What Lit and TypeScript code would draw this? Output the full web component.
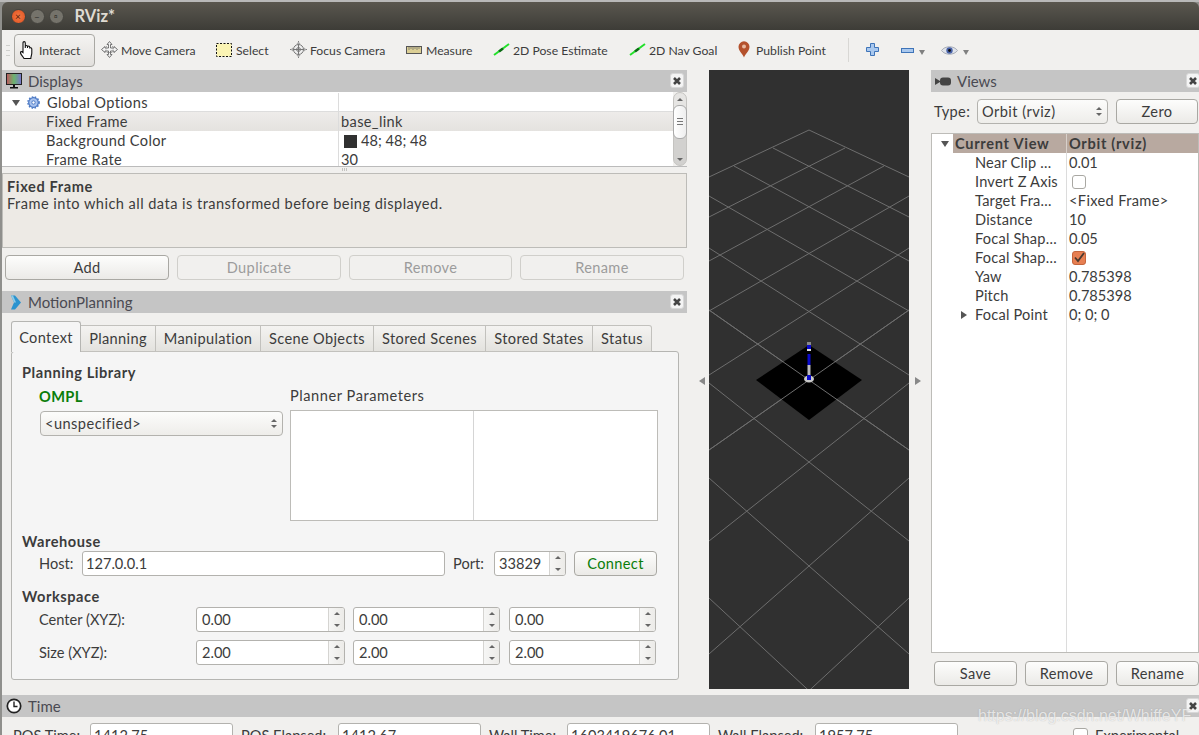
import { LitElement, css, html, svg } from "lit";
import { customElement } from "lit/decorators.js";

// right-hand half of the grid, in canvas pixels; the other half is mirrored around x = 100
const gridLines = [
  [100, 60, 0, 107],
  [136, 78, 0, 147],
  [175, 96, 0, 191],
  [200, 126, 0, 241],
  [200, 178, 0, 305],
  [200, 240, 0, 380],
  [200, 313, 0, 471],
  [200, 408, 0, 584],
  [200, 528, 90, 630],
];

const updown = html`<span class="updown"><i class="up"></i><i class="down"></i></span>`;

const spin = (value: string, cls: string) =>
  html`<div class="spin ${cls}"><span class="val">${value}</span><span class="spin-btns"><b><i class="up"></i></b><b><i class="down"></i></b></span></div>`;

const closeBtn = html`<span class="close"><svg width="10" height="10" viewBox="0 0 10 10"><path d="M2 2l6 6M8 2l-6 6" stroke="#444" stroke-width="2.6"/></svg></span>`;

const icons = {
  hand: html`<svg width="18" height="20" viewBox="0 0 18 20"><path d="M5 18.500c-1-2-3-3.500-3.500-5.500-.3-1.500 1-2 2.500-.5V3c0-1.800 2.300-1.800 2.300 0v5-1.500c0-1.400 2.200-1.400 2.200 0V8 7c0-1.300 2.200-1.300 2.200 0v1.500c0-1.200 2.100-1 2.100.4V13c0 2-1 3.500-1 5.500z" fill="#fff" stroke="#111" stroke-width="1.100"/></svg>`,
  move: html`<svg width="17" height="17" viewBox="0 0 17 17"><path d="M8.500 .5l2.500 3H9.500v3.500h3.500V5.500l3.500 3-3.500 3V10H9.500v3.500H11l-2.500 3-2.500-3h1.500V10H4v1.500l-3.500-3 3.500-3V7h3.500V3.500H6z" fill="#f4f4f4" stroke="#666" stroke-width=".9"/><path d="M5 5.500h7v6H5z" fill="none" stroke="#888" stroke-width=".7" stroke-dasharray="1 1"/></svg>`,
  select: html`<svg width="16" height="14" viewBox="0 0 16 14"><rect x=".5" y=".5" width="15" height="13" fill="#fbf4b4" stroke="#111" stroke-dasharray="2 1.500"/></svg>`,
  focus: html`<svg width="17" height="17" viewBox="0 0 17 17"><circle cx="8.500" cy="8.500" r="5" fill="#eee" stroke="#777"/><circle cx="8.500" cy="8.500" r="2" fill="#ddd" stroke="#888"/><path d="M8.500 0v17M0 8.500h17" stroke="#777"/><path d="M8.500 .5l2 2.500h-4zM8.500 16.500l2-2.500h-4zM.5 8.500l2.500-2v4zM16.500 8.500l-2.500-2v4z" fill="#aaa"/></svg>`,
  measure: html`<svg width="16" height="8" viewBox="0 0 16 8"><rect x=".5" y=".5" width="15" height="7" fill="#dccf95" stroke="#555"/><path d="M3 1v3M5 1v2M7 1v3M9 1v2M11 1v3M13 1v2" stroke="#666" stroke-width=".7"/></svg>`,
  arrow: html`<svg width="17" height="13" viewBox="0 0 17 13"><path d="M1 12L16 1" stroke="#22e02a" stroke-width="2"/><path d="M6 8.500l4-3" stroke="#0c6a14" stroke-width="2.400"/></svg>`,
  pin: html`<svg width="12" height="17" viewBox="0 0 12 17"><path d="M6 16.500C4.500 12.500.5 10 .5 5.800a5.500 5.500 0 0 1 11 0C11.500 10 7.500 12.500 6 16.500z" fill="#b4512c"/><circle cx="6" cy="5.500" r="2" fill="#e8b9a0"/></svg>`,
  plus: html`<svg width="13" height="13" viewBox="0 0 13 13"><path d="M4.500 .5h4v4h4v4h-4v4h-4v-4h-4v-4h4z" fill="#a9c8ee" stroke="#3f74b8"/></svg>`,
  minus: html`<svg width="13" height="5" viewBox="0 0 13 5"><rect x=".5" y=".5" width="12" height="4" fill="#a9c8ee" stroke="#3f74b8"/></svg>`,
  eye: html`<svg width="17" height="11" viewBox="0 0 17 11"><path d="M.5 5.500C4 .5 13 .5 16.500 5.500 13 10.500 4 10.500 .5 5.500z" fill="#dfe3ea" stroke="#a8adb8"/><circle cx="8.500" cy="5.500" r="3.200" fill="#4a63a8"/><circle cx="8.500" cy="5.500" r="1.400" fill="#111"/></svg>`,
  monitor: html`<svg width="16" height="16" viewBox="0 0 16 16"><defs><linearGradient id="scr"><stop offset="0" stop-color="#c0555f"/><stop offset=".5" stop-color="#6ab56e"/><stop offset="1" stop-color="#7d74d0"/></linearGradient></defs><rect x=".5" y=".5" width="15" height="11" fill="url(#scr)" stroke="#222"/><path d="M7 12h2v2H7zM4 14h8v1.500H4z" fill="#111"/></svg>`,
  gear: html`<svg width="13" height="13" viewBox="0 0 13 13"><circle cx="6.500" cy="6.500" r="4.800" fill="#a9c3ee" stroke="#4a78c4" stroke-width="1.200"/><circle cx="6.500" cy="6.500" r="5.600" fill="none" stroke="#4a78c4" stroke-width="1.500" stroke-dasharray="1.500 1.500"/><circle cx="6.500" cy="6.500" r="1.700" fill="#fff" stroke="#4a78c4"/></svg>`,
  motion: html`<svg class="motion" width="12" height="15" viewBox="0 0 12 15"><path d="M1 .5l4 0 6 7-6 7-4 0 3-7z" fill="#2a93cf"/><path d="M1 .5l2 0 3 7-2 0z" fill="#8ecbe8"/></svg>`,
  clock: html`<svg width="16" height="16" viewBox="0 0 16 16"><circle cx="8" cy="8" r="6.700" fill="#fff" stroke="#222" stroke-width="1.700"/><path d="M8 3.500V8.500H11.500" fill="none" stroke="#222" stroke-width="1.400"/></svg>`,
  camera: html`<svg width="16" height="9" viewBox="0 0 16 9"><path d="M0 1l5 3v1L0 8z" fill="#444"/><rect x="5" y=".5" width="11" height="8" rx="3" fill="#444"/></svg>`,
};

const tools = [
  { icon: icons.move, label: "Move Camera", cls: "" },
  { icon: icons.select, label: "Select", cls: "" },
  { icon: icons.focus, label: "Focus Camera", cls: "" },
  { icon: icons.measure, label: "Measure", cls: "" },
  { icon: icons.arrow, label: "2D Pose Estimate", cls: "" },
  { icon: icons.arrow, label: "2D Nav Goal", cls: "" },
  { icon: icons.pin, label: "Publish Point", cls: "narrow" },
];

const viewRows: [string, unknown][] = [
  ["Near Clip …", "0.01"],
  ["Invert Z Axis", html`<span class="check"></span>`],
  ["Target Fra…", html`<span class="wide">&lt;Fixed Frame&gt;</span>`],
  ["Distance", "10"],
  ["Focal Shap…", "0.05"],
  ["Focal Shap…", html`<span class="check on"><svg width="14" height="14" viewBox="0 0 14 14"><path d="M3 6.500l3 3.500 6-8" fill="none" stroke="#4a3a30" stroke-width="1.800"/></svg></span>`],
  ["Yaw", "0.785398"],
  ["Pitch", "0.785398"],
  ["Focal Point", "0; 0; 0"],
];

@customElement("app-root")
export class AppRoot extends LitElement {
  static styles = css`
    :host {
      display: block;
      width: 1199px;
      height: 735px;
      overflow: hidden;
      position: relative;
      background: #8f8f8c;
      font-family: "Lato", "Liberation Sans", sans-serif;
      font-size: 14.6px;
      letter-spacing: .35px;
      color: #3c3c3c;
    }
    svg { display: block; flex: none; }
    .strip { height: 2px; background: #b9b9b9; }
    .titlebar {
      height: 28px;
      margin-left: 2px;
      border-radius: 6px 6px 0 0;
      background: linear-gradient(#5a574f, #3d3c37);
      display: flex;
      align-items: center;
      padding-left: 8.500px;
      gap: 4px;
      box-sizing: border-box;
    }
    .dot { width: 15px; height: 15px; border-radius: 50%; background: #75736b; border: 1px solid #44433e; box-sizing: border-box; display: grid; place-items: center; color: #33322e; font-size: 10px; line-height: 1; letter-spacing: 0; }
    .dot.red { background: radial-gradient(#f47a45, #df4f1e); color: #5a1c08; }
    .title { margin-left: 7px; color: #dfdbd2; font-weight: 700; font-size: 16.500px; letter-spacing: 0; }
    .body { margin-left: 2px; height: 705px; position: relative; background: #f1f0ee; }
    .toolbar {
      height: 40px;
      display: grid;
      grid-template-columns: 12px 81px 6px 115px 74px 116px 87px 136px 109px 110px 18px 35px 40px 60px;
      align-items: center;
      font-size: 12.200px;
      letter-spacing: 0;
      box-sizing: border-box;
    }
    .grip { width: 4px; height: 9px; margin-left: 4px; border-top: 1px solid #cfcfcc; border-bottom: 1px solid #cfcfcc; background: linear-gradient(#cfcfcc, #cfcfcc) center / 100% 1px no-repeat; }
    .interact {
      height: 33px;
      box-sizing: border-box;
      border: 1px solid #a9a8a3;
      border-radius: 4px;
      background: linear-gradient(#f4f3f1, #e2e0dd);
      display: flex;
      align-items: center;
      gap: 2px;
      padding-left: 4px;
    }
    .tool { display: flex; align-items: center; gap: 4px; white-space: nowrap; }
    .tool svg { margin-bottom: 1px; }
    .tool.narrow { margin-left: -2px; }
    .tool-icon { width: 16px; display: grid; justify-items: center; flex: none; }
    .sep { width: 1px; height: 24px; background: #d8d7d4; }
    .drop { display: flex; align-items: center; gap: 5px; }
    .caret { width: 0; height: 0; border: 3.500px solid transparent; border-top: 5px solid #808080; border-bottom: 0; margin-top: 5px; }

    .main { display: flex; height: 625px; }
    .left { width: 685px; flex: none; display: flex; flex-direction: column; }
    .right { flex: 1; min-width: 0; display: flex; flex-direction: column; }
    .handle { width: 22px; flex: none; display: grid; place-items: center; height: 619px; }
    .tri-l { width: 0; height: 0; border: 4px solid transparent; border-right: 6px solid #888; border-left: 0; margin-top: 2px; margin-left: 8px; }
    .tri-r { width: 0; height: 0; border: 4px solid transparent; border-left: 6px solid #888; border-right: 0; margin-top: 2px; margin-right: 4px; }
    .canvas { width: 200px; height: 619px; flex: none; background: #303030; }

    .dock-head {
      height: 22px;
      flex: none;
      background: #c5c5c5;
      display: flex;
      align-items: center;
      gap: 6px;
      padding-left: 4px;
      color: #4a4a52;
      font-size: 15px;
      letter-spacing: 0;
      position: relative;
    }
    .motion { margin-left: 4px; }
    .close {
      position: absolute;
      right: 3px;
      top: 3px;
      width: 14px;
      height: 15px;
      box-sizing: border-box;
      border: 1px solid #d8d8d8;
      border-radius: 3px;
      background: #f4f4f4;
      display: grid;
      place-items: center;
    }
    .right .close, .time-bar .close { right: -1px; }

    .tree-wrap { display: flex; height: 75px; flex: none; border-bottom: 1px solid #bbb; box-sizing: border-box; }
    .tree { flex: 1; background: #fff; overflow: hidden; }
    .row { display: grid; grid-template-columns: 337px 1fr; height: 19px; line-height: 19px; white-space: nowrap; }
    .row > :first-child { padding-left: 44px; border-right: 1px solid #dcdcdc; }
    .row > :last-child { padding-left: 2px; }
    .row .num { letter-spacing: 0; }
    .row.opt { height: 20px; border-bottom: 1px solid #ddd; box-sizing: border-box; padding-top: 1px; }
    .row.opt > :first-child { padding-left: 10px; display: flex; align-items: center; gap: 7px; }
    .row.sel { background: linear-gradient(#eeecea, #e4e2df); }
    .tw { width: 0; height: 0; border: 4px solid transparent; border-top: 6px solid #555; border-bottom: 0; margin-top: 1px; flex: none; }
    .tw.side { border: 4px solid transparent; border-left: 6px solid #555; border-right: 0; margin: 0; }
    .swatch { width: 13px; height: 13px; background: #303030; display: inline-block; margin: 0 4px 0 3px; vertical-align: -2px; }
    .vscroll { width: 14px; flex: none; background: linear-gradient(#e6e5e3 0 14px, #d2d1cf 14px); border: 1px solid #c4c3c0; border-radius: 7px; box-sizing: border-box; display: flex; flex-direction: column; align-items: center; justify-content: space-between; padding: 5px 0 4px; position: relative; }
    .thumb { position: absolute; top: 12px; left: -1px; width: 14px; height: 34px; box-sizing: border-box; border: 1px solid #aaa; border-radius: 6px; background: linear-gradient(#777, #777) center 12px / 6px 1px no-repeat, linear-gradient(#777, #777) center 15px / 6px 1px no-repeat, linear-gradient(#777, #777) center 18px / 6px 1px no-repeat, linear-gradient(90deg, #fff, #eee); }
    .up { display: block; width: 0; height: 0; border: 3px solid transparent; border-bottom: 3.500px solid #666; border-top: 0; }
    .down { display: block; width: 0; height: 0; border: 3px solid transparent; border-top: 3.500px solid #666; border-bottom: 0; }
    .splitter { height: 6px; flex: none; display: flex; justify-content: center; }
    .splitter i { width: 5px; height: 3px; margin: 1px 0 0 0; background: repeating-linear-gradient(90deg, #c4c3c0 0 1px, transparent 1px 2px); }
    .desc { height: 75px; flex: none; box-sizing: border-box; background: #edeae5; border: 1px solid #bdbcb8; padding: 4px 4px; line-height: 17px; letter-spacing: .45px; }
    .desc b { display: block; letter-spacing: .6px; }
    .btn {
      height: 25px;
      box-sizing: border-box;
      border: 1px solid #a9a8a3;
      border-radius: 4px;
      background: linear-gradient(#fdfdfc, #ebeae7);
      display: grid;
      place-items: center;
      white-space: nowrap;
    }
    .btn.off { border-color: #d0cfcb; background: #f1f0ee; color: #9c9c9c; }
    .btns { display: grid; grid-template-columns: 164px 164px 163px 164px; gap: 8px; padding: 7px 3px 0; margin-bottom: 11px; }
    .btns .btn { width: 100%; }

    .tabs { display: flex; align-items: flex-end; height: 39px; padding-left: 9px; flex: none; box-sizing: border-box; margin-bottom: -1px; position: relative; }
    .tab { height: 27px; box-sizing: border-box; border: 1px solid #c2c1bd; border-left: 0; background: linear-gradient(#f4f3f1, #e3e2de); display: grid; place-items: center; white-space: nowrap; }
    .tab.on { height: 31px; width: 70px; border: 1px solid #b5b5b2; border-bottom: 0; border-radius: 3px 3px 0 0; background: #f5f5f5; z-index: 1; }
    .tab.planning { width: 75px; }
    .tab.manip { width: 105px; }
    .tab.scene { width: 113px; }
    .tab.scenes { width: 112px; }
    .tab.states { width: 107px; }
    .tab.status { width: 59px; border-radius: 0 3px 0 0; }
    .pane {
      margin-left: 9px;
      width: 668px;
      height: 329px;
      box-sizing: border-box;
      border: 1px solid #b5b5b2;
      border-radius: 3px;
      background: #f5f5f5;
      padding: 11px 10px 0;
      display: flex;
      flex-direction: column;
    }
    .pane > b { font-weight: 700; line-height: 19px; display: block; letter-spacing: .55px; }
    .lib { display: grid; grid-template-columns: 243px 368px; column-gap: 7px; margin-left: 18px; margin-top: 5px; }
    .lib .ompl { color: #0a7d0a; font-weight: 700; line-height: 19px; margin-left: -1px; }
    .lib .pp { line-height: 18px; letter-spacing: .55px; }
    .combo { margin-top: 5px; height: 25px; box-sizing: border-box; border: 1px solid #b3b2ae; border-radius: 4px; background: linear-gradient(#fcfcfb, #eeedea); display: flex; align-items: center; justify-content: space-between; padding: 0 5px 0 4px; letter-spacing: .45px; }
    .updown { display: flex; flex-direction: column; gap: 3px; }
    .planner { margin-top: 5px; height: 111px; box-sizing: border-box; border: 1px solid #bdbcb8; background: #fff; display: grid; grid-template-columns: 183px 1fr; }
    .planner i { border-right: 1px solid #d5d5d5; }
    .h-ware { margin-top: 11px; }
    .ware { display: flex; align-items: center; margin: 0 0 0 17px; height: 25px; }
    .ware .lbl1 { width: 43px; letter-spacing: 0; }
    .field { height: 25px; box-sizing: border-box; border: 1px solid #b3b2ae; border-radius: 3px; background: #fff; display: flex; align-items: center; padding-left: 3px; flex: none; overflow: hidden; white-space: nowrap; letter-spacing: 0; }
    .host { width: 363px; }
    .ware .lbl2 { width: 41px; margin-left: 8px; letter-spacing: 0; }
    .spin { height: 25px; box-sizing: border-box; border: 1px solid #b3b2ae; border-radius: 3px; background: #fff; display: flex; align-items: stretch; flex: none; overflow: hidden; letter-spacing: 0; }
    .spin .val { flex: 1; padding-left: 5px; line-height: 23px; white-space: nowrap; }
    .spin-btns { width: 15px; flex: none; border-left: 1px solid #d5d4d1; background: linear-gradient(90deg, #f6f6f5, #ecebe8); display: flex; flex-direction: column; }
    .spin-btns b { flex: 1; display: grid; place-items: center; line-height: 0; }
    .port { width: 72px; }
    .port .val { padding-left: 4px; }
    .connect { width: 83px; margin-left: 8px; color: #0a7d0a; flex: none; }
    .h-work { margin-top: 11px; }
    .ws { display: grid; grid-template-columns: 149px 149px 147px 147px; column-gap: 8px; margin-top: 1px; align-items: center; padding-left: 17px; letter-spacing: 0; }
    .ws.two { margin-top: 8px; }
    .s1 { width: 149px; }
    .s2 { width: 147px; }
    .s3 { width: 147px; margin-left: 1px; }

    .view-type { display: flex; align-items: center; height: 25px; margin-top: 7px; flex: none; padding-left: 3px; }
    .view-type .lbl { width: 43px; }
    .view-type .combo { margin: 0; width: 131px; }
    .zero { width: 82px; margin-left: 8px; flex: none; }
    .vtree { margin-top: 9px; height: 520px; flex: none; box-sizing: border-box; border: 1px solid #bdbcb8; background: #fff; overflow: hidden; }
    .vrow { display: grid; grid-template-columns: 135px 1fr; height: 19px; line-height: 19px; white-space: nowrap; letter-spacing: .2px; }
    .vrow > :first-child { padding-left: 43px; border-right: 1px solid #dcdcdc; display: flex; align-items: center; position: relative; }
    .vrow > :last-child { padding-left: 2px; display: flex; align-items: center; letter-spacing: 0; }
    .vrow .wide { letter-spacing: .35px; }
    .vrow .tw.side { position: absolute; left: 29px; top: 6px; }
    .vfill { height: 330px; display: grid; grid-template-columns: 135px 1fr; }
    .vfill i { border-right: 1px solid #dcdcdc; }
    .vhead { display: grid; grid-template-columns: 21px 114px 1fr; height: 19px; line-height: 19px; font-weight: 700; letter-spacing: .7px; }
    .vhead > span { background: #b8a9a0; }
    .vhead .twbox { background: #fff; display: grid; place-items: center; padding-left: 5px; }
    .vhead .name { padding-left: 2px; border-right: 1px solid #d8d0ca; }
    .vhead .val { padding-left: 2px; }
    .check { width: 14px; height: 14px; margin-left: 3px; box-sizing: border-box; border: 1px solid #a9a8a3; border-radius: 3px; background: #fff; display: block; flex: none; }
    .check.on { background: #e77f52; border-color: #c4653d; }
    .check.on svg { margin: -1px; }
    .view-btns { display: grid; grid-template-columns: 83px 83px 83px; column-gap: 8px; padding: 8px 0 0 3px; }

    .time-bar { height: 40px; overflow: hidden; }
    .time-row { display: flex; align-items: center; height: 25px; margin-top: 6px; padding-left: 11px; white-space: nowrap; letter-spacing: 0; }
    .time-row .t-lbl { flex: none; }
    .t1 { width: 77px; }
    .t2 { width: 97px; }
    .t3 { width: 78px; }
    .t4 { width: 97px; }
    .t-val { width: 143px; margin-right: 8px; }
    .exp-check { margin-left: 107px; width: 15px; height: 15px; }
    .exp { margin-left: 7px; }
    .watermark { position: absolute; left: 978px; top: 707px; color: rgba(255, 255, 255, .72); font-family: "Liberation Sans", sans-serif; font-size: 16px; letter-spacing: 0; white-space: nowrap; text-shadow: 0 0 1px rgba(120, 120, 120, .5); }
  `;

  private renderGrid() {
    const line = ([x1, y1, x2, y2]: number[]) => svg`
      <line x1=${x1} y1=${y1} x2=${x2} y2=${y2} stroke="#6e6e6e"/>
      <line x1=${200 - x1} y1=${y1} x2=${200 - x2} y2=${y2} stroke="#6e6e6e"/>`;
    return html`<svg class="canvas" width="200" height="619" viewBox="0 0 200 619">
      ${gridLines.map(line)}
      <path d="M100 275L153 310 100 350 47 310z" fill="#000"/>
      ${line(gridLines[5])}
      <ellipse cx="100" cy="309" rx="5" ry="3.500" fill="#c9c9c9"/>
      <path d="M100 272v3" stroke="#888" stroke-width="4"/>
      <path d="M100 275v4" stroke="#0a0acb" stroke-width="4"/>
      <path d="M100 279v2" stroke="#ddd" stroke-width="4"/>
      <path d="M100 284v11" stroke="#0a0acb" stroke-width="3"/>
      <path d="M100 295v10" stroke="#bdbdbd" stroke-width="3"/>
      <path d="M100 305v5" stroke="#0a0acb" stroke-width="4"/>
    </svg>`;
  }

  render() {
    return html`
      <div class="strip"></div>
      <div class="titlebar">
        <span class="dot red">×</span><span class="dot">–</span><span class="dot">▫</span>
        <span class="title">RViz*</span>
      </div>
      <div class="body">
        <div class="toolbar">
          <span class="grip"></span>
          <div class="interact">${icons.hand}<span>Interact</span></div>
          <span></span>
          ${tools.map((t) => html`<div class="tool ${t.cls}"><span class="tool-icon">${t.icon}</span><span>${t.label}</span></div>`)}
          <span class="sep"></span>
          <div class="tool">${icons.plus}</div>
          <div class="drop">${icons.minus}<span class="caret"></span></div>
          <div class="drop">${icons.eye}<span class="caret"></span></div>
        </div>
        <div class="main">
          <div class="left">
            <div class="dock-head">${icons.monitor}<span>Displays</span>${closeBtn}</div>
            <div class="tree-wrap">
              <div class="tree">
                <div class="row opt"><div><span class="tw"></span>${icons.gear}<span>Global Options</span></div><div></div></div>
                <div class="row sel"><div>Fixed Frame</div><div>base_link</div></div>
                <div class="row"><div>Background Color</div><div class="num"><span class="swatch"></span>48; 48; 48</div></div>
                <div class="row"><div>Frame Rate</div><div class="num">30</div></div>
              </div>
              <div class="vscroll"><i class="up"></i><span class="thumb"></span><i class="down"></i></div>
            </div>
            <div class="splitter"><i></i></div>
            <div class="desc"><b>Fixed Frame</b>Frame into which all data is transformed before being displayed.</div>
            <div class="btns">
              <div class="btn">Add</div>
              <div class="btn off">Duplicate</div>
              <div class="btn off">Remove</div>
              <div class="btn off">Rename</div>
            </div>
            <div class="dock-head">${icons.motion}<span>MotionPlanning</span>${closeBtn}</div>
            <div class="tabs">
              <div class="tab on">Context</div>
              <div class="tab planning">Planning</div>
              <div class="tab manip">Manipulation</div>
              <div class="tab scene">Scene Objects</div>
              <div class="tab scenes">Stored Scenes</div>
              <div class="tab states">Stored States</div>
              <div class="tab status">Status</div>
            </div>
            <div class="pane">
              <b>Planning Library</b>
              <div class="lib">
                <div>
                  <div class="ompl">OMPL</div>
                  <div class="combo"><span>&lt;unspecified&gt;</span>${updown}</div>
                </div>
                <div>
                  <div class="pp">Planner Parameters</div>
                  <div class="planner"><i></i><span></span></div>
                </div>
              </div>
              <b class="h-ware">Warehouse</b>
              <div class="ware">
                <span class="lbl1">Host:</span>
                <div class="field host">127.0.0.1</div>
                <span class="lbl2">Port:</span>
                ${spin("33829", "port")}
                <div class="btn connect">Connect</div>
              </div>
              <b class="h-work">Workspace</b>
              <div class="ws">
                <span>Center (XYZ):</span>
                ${spin("0.00", "s1")}${spin("0.00", "s2")}${spin("0.00", "s3")}
              </div>
              <div class="ws two">
                <span>Size (XYZ):</span>
                ${spin("2.00", "s1")}${spin("2.00", "s2")}${spin("2.00", "s3")}
              </div>
            </div>
          </div>
          <div class="handle"><span class="tri-l"></span></div>
          ${this.renderGrid()}
          <div class="handle"><span class="tri-r"></span></div>
          <div class="right">
            <div class="dock-head">${icons.camera}<span>Views</span>${closeBtn}</div>
            <div class="view-type">
              <span class="lbl">Type:</span>
              <div class="combo"><span>Orbit (rviz)</span>${updown}</div>
              <div class="btn zero">Zero</div>
            </div>
            <div class="vtree">
              <div class="vhead"><span class="twbox"><i class="tw"></i></span><span class="name">Current View</span><span class="val">Orbit (rviz)</span></div>
              ${viewRows.map(
                ([name, value], i) => html`<div class="vrow"><div>${i === 8 ? html`<i class="tw side"></i>` : ""}<span>${name}</span></div><div>${value}</div></div>`
              )}
              <div class="vfill"><i></i><span></span></div>
            </div>
            <div class="view-btns">
              <div class="btn">Save</div>
              <div class="btn">Remove</div>
              <div class="btn">Rename</div>
            </div>
          </div>
        </div>
        <div class="time-bar">
          <div class="dock-head">${icons.clock}<span>Time</span>${closeBtn}</div>
          <div class="time-row">
            <span class="t-lbl t1">POS Time:</span><div class="field t-val">1412.75</div>
            <span class="t-lbl t2">POS Elapsed:</span><div class="field t-val">1412.67</div>
            <span class="t-lbl t3">Wall Time:</span><div class="field t-val">1603419676.01</div>
            <span class="t-lbl t4">Wall Elapsed:</span><div class="field t-val">1957.75</div>
            <span class="check exp-check"></span><span class="exp">Experimental</span>
          </div>
        </div>
      </div>
      <div class="watermark">https://blog.csdn.net/WhiffeYF</div>
    `;
  }
}
